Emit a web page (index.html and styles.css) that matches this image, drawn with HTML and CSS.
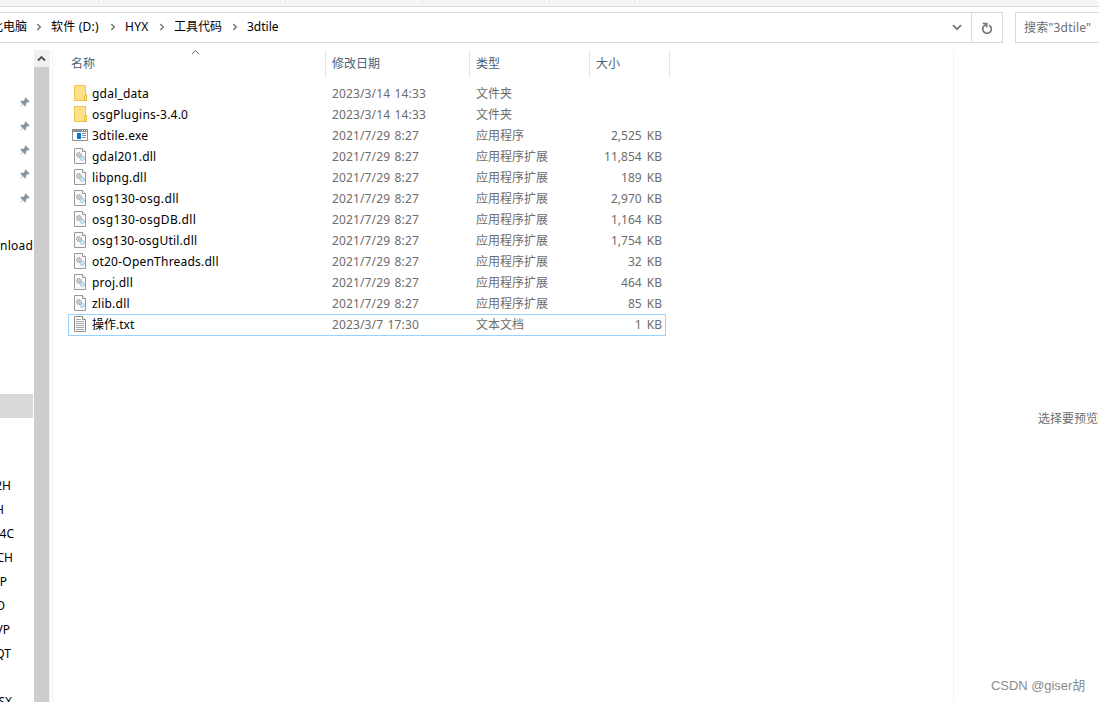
FILE: index.html
```
<!DOCTYPE html>
<html lang="zh-CN">
<head>
    <meta charset="UTF-8">
    <meta name="viewport" content="width=device-width, initial-scale=1.0">
    <title>3dtile</title>
    <link rel="stylesheet" href="styles.css">
</head>
<body>
    <svg class="defs" width="0" height="0">
        <symbol id="folder" viewBox="0 0 16 16">
            <path d="M2.5.5h11v9h1v6h-12z" fill="#ffe08a" stroke="#ecc550"/>
            <path d="M12.500 15.500v-4l1-2h1v6z" fill="#ffe9a8" stroke="#e6b93c"/>
        </symbol>
        <symbol id="exe" viewBox="0 0 16 16">
            <path d="M.5 2.500h15v11H.5z" fill="#fff" stroke="#8a8f94"/>
            <path d="M0 2h16v3H0z" fill="#8a8f94"/>
            <path d="M10 3h1v1h-1zM12 3h1v1h-1zM14 3h1v1h-1z" fill="#fff"/>
            <path d="M5 6h4v6H5z" fill="#0078d7"/>
            <path d="M10 6.500h4M10 8.500h4M10 10.500h4" stroke="#8a9299"/>
        </symbol>
        <symbol id="dll" viewBox="0 0 16 16">
            <path d="M2.500.5h8l3 3v12h-11z" fill="#fafafa" stroke="#999"/>
            <path d="M10.500.5v3h3" fill="#fff" stroke="#999"/>
            <circle cx="7" cy="7" r="2.300" fill="#eceeef" stroke="#92989c" stroke-width="1.200" stroke-dasharray="1.300 .6"/>
            <circle cx="7" cy="7" r=".9" fill="#fff" stroke="#92989c" stroke-width=".6"/>
            <circle cx="10.300" cy="10.500" r="1.900" fill="#e1f0f9" stroke="#8fbcd9" stroke-width="1.200" stroke-dasharray="1.200 .5"/>
        </symbol>
        <symbol id="txt" viewBox="0 0 16 16">
            <path d="M2.500.5h8l3 3v12h-11z" fill="#fff" stroke="#8c8c8c"/>
            <path d="M10.500.5v3h3" fill="#fff" stroke="#8c8c8c"/>
            <path d="M4 3.500h5M4 5.500h8M4 7.500h8M4 9.500h8M4 11.500h8M4 13.500h8" stroke="#a5a5a5"/>
        </symbol>
        <symbol id="pin" viewBox="0 0 12 12">
            <path d="M6.300 1.200l4.500 4.500-1.300.5-.9-.3-1.700 1.900.1 1.800-.9.900-2.200-2.200L1 11l-.2-.2 2.700-2.900-2.200-2.200.9-.9 1.900.1 1.900-1.700-.3-.9z" fill="#8795a1"/>
        </symbol>
        <symbol id="next" viewBox="0 0 6 8">
            <path d="M1.300 1l3 3-3 3" fill="none" stroke="#777" stroke-width="1.500"/>
        </symbol>
    </svg>

    <div class="ribbon">
        <span></span><span></span><span></span><span></span><span></span>
    </div>

    <div class="toolbar">
        <div class="address">
            <div class="crumbs">
                <span class="crumb crumb-root">此电脑</span>
                <svg class="next"><use href="#next"/></svg>
                <span class="crumb crumb-drive">软件 (D:)</span>
                <svg class="next"><use href="#next"/></svg>
                <span class="crumb crumb-user">HYX</span>
                <svg class="next"><use href="#next"/></svg>
                <span class="crumb crumb-code">工具代码</span>
                <svg class="next"><use href="#next"/></svg>
                <span class="crumb">3dtile</span>
            </div>
            <svg class="dropdown" viewBox="0 0 10 7"><path d="M1 1.200l4 4 4-4" fill="none" stroke="#777" stroke-width="1.800"/></svg>
            <div class="refresh">
                <svg width="12" height="12" viewBox="0 0 12 12"><path d="M8 3.200A4.300 4.300 0 1 1 3.300 3.700L5.200 2.300" fill="none" stroke="#777" stroke-width="1.700"/><path d="M1.800 1.600h4v4" fill="none" stroke="#777" stroke-width="1.500"/></svg>
            </div>
        </div>
        <div class="search">搜索"3dtile"</div>
    </div>

    <div class="explorer">
        <div class="sidebar">
            <div class="pins">
                <svg><use href="#pin"/></svg>
                <svg><use href="#pin"/></svg>
                <svg><use href="#pin"/></svg>
                <svg><use href="#pin"/></svg>
                <svg><use href="#pin"/></svg>
            </div>
            <div class="node node-download">Download</div>
            <div class="node-selected"></div>
            <div class="drives">
                <div class="node">2H</div>
                <div class="node">H</div>
                <div class="node">4C</div>
                <div class="node">CH</div>
                <div class="node">P</div>
                <div class="node">D</div>
                <div class="node">VP</div>
                <div class="node">QT</div>
                <div class="node"></div>
                <div class="node">SX</div>
            </div>
        </div>
        <div class="scrollbar">
            <div class="scroll-up"><svg width="9" height="7" viewBox="0 0 9 7"><path d="M1 5.500l3.500-3.500L8 5.500" fill="none" stroke="#505050" stroke-width="1.900"/></svg></div>
        </div>

        <div class="files">
            <div class="columns">
                <div class="name">名称
                    <svg class="sort" viewBox="0 0 9 5"><path d="M.8 4.300l3.700-3.600 3.700 3.600" fill="none" stroke="#666"/></svg>
                </div>
                <div>修改日期</div>
                <div>类型</div>
                <div>大小</div>
            </div>
            <div class="row"><svg><use href="#folder"/></svg><span class="name">gdal_data</span><span class="date">2023/3/14 14:33</span><span>文件夹</span><span class="size"></span></div>
            <div class="row"><svg><use href="#folder"/></svg><span class="name">osgPlugins-3.4.0</span><span class="date">2023/3/14 14:33</span><span>文件夹</span><span class="size"></span></div>
            <div class="row"><svg><use href="#exe"/></svg><span class="name">3dtile.exe</span><span class="date">2021/7/29 8:27</span><span>应用程序</span><span class="size">2,525 KB</span></div>
            <div class="row"><svg><use href="#dll"/></svg><span class="name">gdal201.dll</span><span class="date">2021/7/29 8:27</span><span>应用程序扩展</span><span class="size">11,854 KB</span></div>
            <div class="row"><svg><use href="#dll"/></svg><span class="name">libpng.dll</span><span class="date">2021/7/29 8:27</span><span>应用程序扩展</span><span class="size">189 KB</span></div>
            <div class="row"><svg><use href="#dll"/></svg><span class="name wide">osg130-osg.dll</span><span class="date">2021/7/29 8:27</span><span>应用程序扩展</span><span class="size">2,970 KB</span></div>
            <div class="row"><svg><use href="#dll"/></svg><span class="name wide">osg130-osgDB.dll</span><span class="date">2021/7/29 8:27</span><span>应用程序扩展</span><span class="size">1,164 KB</span></div>
            <div class="row"><svg><use href="#dll"/></svg><span class="name">osg130-osgUtil.dll</span><span class="date">2021/7/29 8:27</span><span>应用程序扩展</span><span class="size">1,754 KB</span></div>
            <div class="row"><svg><use href="#dll"/></svg><span class="name">ot20-OpenThreads.dll</span><span class="date">2021/7/29 8:27</span><span>应用程序扩展</span><span class="size">32 KB</span></div>
            <div class="row"><svg><use href="#dll"/></svg><span class="name">proj.dll</span><span class="date">2021/7/29 8:27</span><span>应用程序扩展</span><span class="size">464 KB</span></div>
            <div class="row"><svg><use href="#dll"/></svg><span class="name">zlib.dll</span><span class="date">2021/7/29 8:27</span><span>应用程序扩展</span><span class="size">85 KB</span></div>
            <div class="row focused"><svg><use href="#txt"/></svg><span class="name">操作.txt</span><span class="date">2023/3/7 17:30</span><span>文本文档</span><span class="size">1 KB</span></div>
        </div>

        <div class="preview">
            <div class="hint">选择要预览的文件。</div>
            <div class="watermark">CSDN @giser胡</div>
        </div>
    </div>
</body>
</html>
```
FILE: styles.css
```
* {
    box-sizing: border-box;
}

body {
    margin: 0;
    height: 702px;
    overflow: hidden;
    display: flex;
    flex-direction: column;
    background: #fff;
    color: #000;
    font: 12px/20px "Noto Sans", "Noto Sans CJK SC", sans-serif;
    white-space: nowrap;
}

svg {
    display: block;
    flex: none;
}

.defs {
    display: none;
}

/* bottom edge of the ribbon */
.ribbon {
    flex: none;
    height: 7px;
    display: grid;
    grid-template-columns: 99px 187px 137px 127px 85px;
    background: #f5f6f7;
    border-bottom: 1px solid #dadbdc;
}

.ribbon span {
    height: 3px;
    border-right: 1px solid #e2e3e4;
}

.toolbar {
    flex: none;
    display: flex;
    gap: 12px;
    height: 43px;
    padding: 5px 0 7px;
}

.address {
    flex: none;
    width: 1003px;
    display: flex;
    align-items: center;
    border: 1px solid #d9d9d9;
    border-left: 0;
}

.crumbs {
    flex: 1;
    display: flex;
    align-items: center;
    height: 29px;
    padding-bottom: 1px;
}

.crumb-root {
    width: 27px;
    display: flex;
    justify-content: flex-end;
}

.next {
    width: 6px;
    height: 8px;
    margin: 0 9px;
}

.crumb-drive {
    width: 50px;
    letter-spacing: 0.2px;
}

.crumb-user {
    width: 25px;
    letter-spacing: 0.3px;
}

.crumb-code {
    width: 49px;
}

.dropdown {
    width: 10px;
    height: 7px;
    margin-right: 9px;
}

.refresh {
    width: 31px;
    height: 29px;
    display: flex;
    align-items: center;
    justify-content: center;
    border-left: 1px solid #d9d9d9;
}

.search {
    flex: 1;
    padding: 5px 0 0 8px;
    border: 1px solid #d9d9d9;
    border-right: 0;
    color: #6d6d6d;
    letter-spacing: 0.2px;
}

.explorer {
    flex: 1;
    min-height: 0;
    display: flex;
}

.sidebar {
    flex: none;
    width: 34px;
    padding-top: 40px;
}

.pins svg {
    width: 12px;
    height: 12px;
    margin: 6px 0 12px 19px;
}

.node {
    height: 24px;
    line-height: 24px;
    display: flex;
    justify-content: flex-end;
}

.node-download {
    width: 33px;
    margin-top: 30px;
    letter-spacing: 0.2px;
}

.node-selected {
    width: 33px;
    height: 24px;
    margin: 136px 0 56px;
    background: #d9d9d9;
}

/* the pane is scrolled sideways, only the label ends stay in view */
.drives .node:nth-child(1) { width: 11px; }
.drives .node:nth-child(2) { width: 4px; }
.drives .node:nth-child(3) { width: 14px; }
.drives .node:nth-child(4) { width: 13px; }
.drives .node:nth-child(5) { width: 7px; }
.drives .node:nth-child(6) { width: 5px; }
.drives .node:nth-child(7) { width: 10px; }
.drives .node:nth-child(8) { width: 11px; }
.drives .node:nth-child(10) { width: 12px; }

.scrollbar {
    flex: none;
    width: 16px;
    background: #cdcdcd;
    border-right: 1px solid #f0f0f0;
}

.scroll-up {
    height: 17px;
    display: flex;
    align-items: center;
    justify-content: center;
    background: #f0f0f0;
}

.files {
    flex: none;
    width: 901px;
    margin-left: 2px;
    padding-left: 15px;
    border-left: 1px solid #f2f2f2;
}

.columns {
    display: grid;
    grid-template-columns: 258px 144px 120px 80px;
    height: 28px;
    margin-bottom: 5px;
    line-height: 27px;
    color: #4c607a;
}

.columns div {
    padding-left: 6px;
    border-right: 1px solid #e5e5e5;
}

.columns .name {
    position: relative;
    padding-left: 3px;
}

.sort {
    position: absolute;
    top: 0;
    left: 123px;
    width: 9px;
    height: 5px;
}

.row {
    width: 598px;
    height: 21px;
    display: grid;
    grid-template-columns: 20px 240px 144px 110px 76px;
    padding-left: 4px;
    line-height: 21px;
    color: #6d6d6d;
}

.row svg {
    width: 16px;
    height: 16px;
    margin-top: 2px;
}

.row .name {
    color: #000;
    letter-spacing: 0.22px;
}

.row .wide {
    letter-spacing: 0.36px;
}

.row .date {
    letter-spacing: 0.13px;
    word-spacing: 1.2px;
}

.row .size {
    text-align: right;
    word-spacing: 2px;
}

.focused {
    height: 22px;
    padding-left: 3px;
    border: 1px solid #99d1ff;
    line-height: 20px;
}

.focused svg {
    margin-top: 1px;
}

.focused .name {
    letter-spacing: 0;
}

.preview {
    flex: 1;
    min-width: 0;
    display: flex;
    flex-direction: column;
    justify-content: space-between;
    padding: 359px 0 5px;
    border-left: 1px solid #f2f2f2;
}

.hint {
    padding-left: 84px;
    color: #6d6d6d;
    overflow: hidden;
}

.watermark {
    padding-left: 37px;
    font: 13px/22px "Liberation Sans", "Noto Sans CJK SC", sans-serif;
    letter-spacing: -0.05px;
    color: #8c8c8c;
}
```
